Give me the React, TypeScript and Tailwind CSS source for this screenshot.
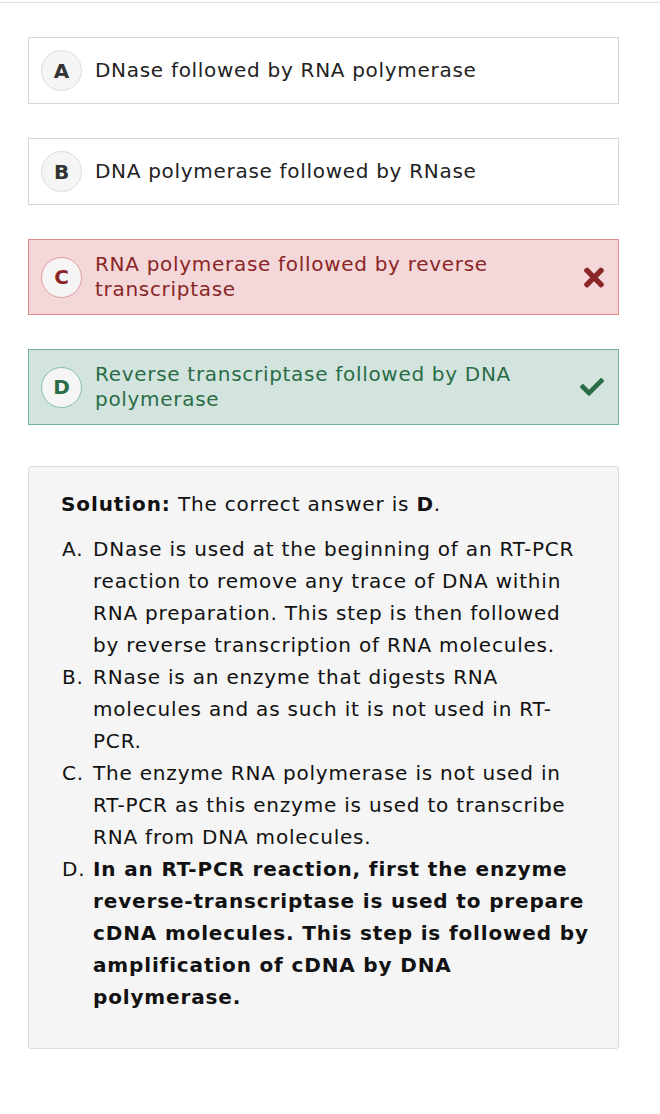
import { FaCheck, FaTimes } from "react-icons/fa";

type Tone = "plain" | "wrong" | "right";

const OPTIONS: { letter: string; text: string; tone: Tone }[] = [
	{ letter: "A", text: "DNase followed by RNA polymerase", tone: "plain" },
	{ letter: "B", text: "DNA polymerase followed by RNase", tone: "plain" },
	{ letter: "C", text: "RNA polymerase followed by reverse transcriptase", tone: "wrong" },
	{ letter: "D", text: "Reverse transcriptase followed by DNA polymerase", tone: "right" },
];

const BOX: Record<Tone, string> = {
	plain: "border-[#d6d6d6] bg-white text-[#222]",
	wrong: "border-[#e38b8b] bg-[#f3d7d9] text-[#8a2626]",
	right: "border-[#74b39b] bg-[#d2e4dd] text-[#2a6c47]",
};

const CIRCLE: Record<Tone, string> = {
	plain: "border-[#dcdcdc] text-[#333]",
	wrong: "border-[#e39a9a] text-[#8a2626]",
	right: "border-[#84bfa6] text-[#2a6c47]",
};

function Option({ letter, text, tone }: { letter: string; text: string; tone: Tone }) {
	return (
		<div className={`flex items-center border py-3 pl-3 pr-[14px] ${BOX[tone]}`}>
			<div
				className={`flex h-[41px] w-[41px] shrink-0 items-center justify-center rounded-full border bg-[#f5f5f5] text-[20px] font-bold ${CIRCLE[tone]}`}
			>
				{letter}
			</div>
			<p className="ml-[13px] mr-4 flex-1 text-[20px] leading-[25px] tracking-[0.7px]">{text}</p>
			{tone === "wrong" && <FaTimes className="h-[29px] w-[20px] text-[#8a2626]" />}
			{tone === "right" && <FaCheck className="h-[24px] w-[24px] text-[#2a6c47]" />}
		</div>
	);
}

const EXPLAIN: { mark: string; text: string; bold?: boolean }[] = [
	{
		mark: "A.",
		text: "DNase is used at the beginning of an RT-PCR reaction to remove any trace of DNA within RNA preparation. This step is then followed by reverse transcription of RNA molecules.",
	},
	{
		mark: "B.",
		text: "RNase is an enzyme that digests RNA molecules and as such it is not used in RT-PCR.",
	},
	{
		mark: "C.",
		text: "The enzyme RNA polymerase is not used in RT-PCR as this enzyme is used to transcribe RNA from DNA molecules.",
	},
	{
		mark: "D.",
		text: "In an RT-PCR reaction, first the enzyme reverse-transcriptase is used to prepare cDNA molecules. This step is followed by amplification of cDNA by DNA polymerase.",
		bold: true,
	},
];

export default function App() {
	return (
		<div className="min-h-[1114px] bg-white font-['DejaVu_Sans',sans-serif] text-[#111]">
			<div className="pt-[2px]">
				<div className="border-t border-[#dedede] pl-7 pr-[41px] pt-[34px]">
					<div className="flex flex-col gap-[34px]">
						{OPTIONS.map((o) => (
							<Option key={o.letter} {...o} />
						))}
					</div>
					<div className="mt-[41px] rounded-[3px] border border-[#dcdcdc] bg-[#f5f5f5] pb-[35px] pl-[32px] pr-[26px] pt-[21px] text-[20px] leading-[32px] tracking-[0.8px]">
						<p>
							<b className="tracking-[0.9px]">Solution:</b> The correct answer is <b>D</b>.
						</p>
						<ol className="mt-[13px]">
							{EXPLAIN.map((e) => (
								<li key={e.mark} className="flex">
									<span className="w-[32px] shrink-0 pl-px">{e.mark}</span>
									<span className={e.bold ? "font-bold tracking-[0.85px]" : ""}>{e.text}</span>
								</li>
							))}
						</ol>
					</div>
				</div>
			</div>
		</div>
	);
}
